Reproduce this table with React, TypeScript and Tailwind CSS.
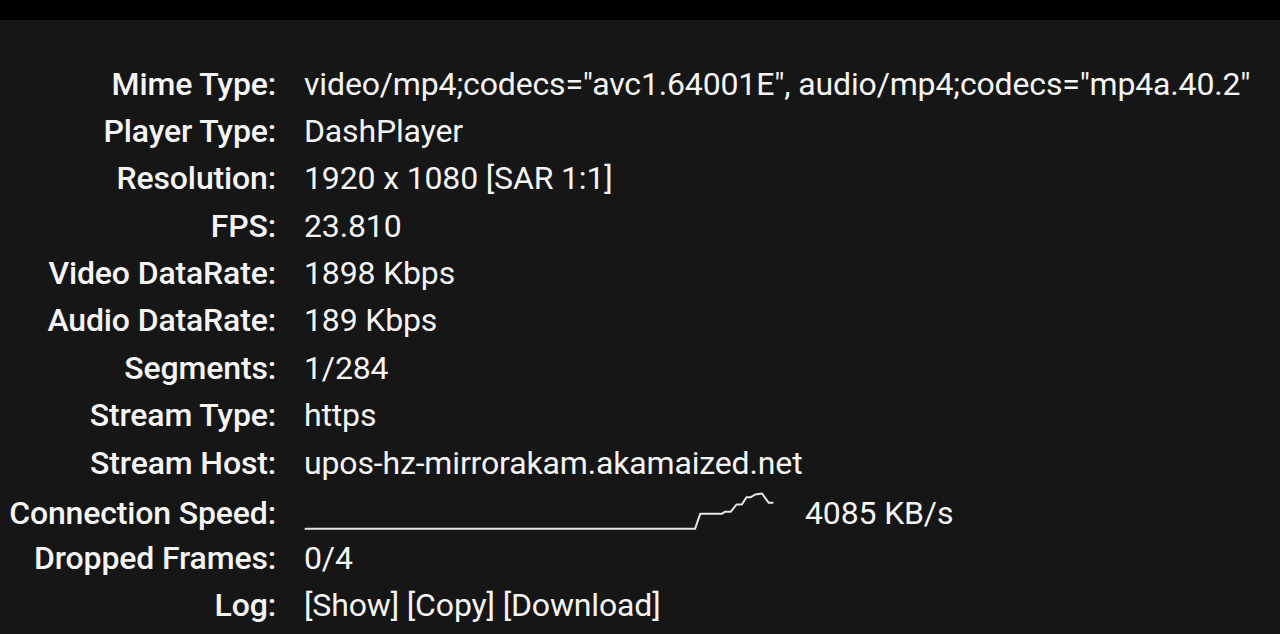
import React from 'react';

type Row = { label: string; value: string };

const rows: Row[] = [
  { label: 'Mime Type:', value: 'video/mp4;codecs="avc1.64001E", audio/mp4;codecs="mp4a.40.2"' },
  { label: 'Player Type:', value: 'DashPlayer' },
  { label: 'Resolution:', value: '1920 x 1080 [SAR 1:1]' },
  { label: 'FPS:', value: '23.810' },
  { label: 'Video DataRate:', value: '1898 Kbps' },
  { label: 'Audio DataRate:', value: '189 Kbps' },
  { label: 'Segments:', value: '1/284' },
  { label: 'Stream Type:', value: 'https' },
  { label: 'Stream Host:', value: 'upos-hz-mirrorakam.akamaized.net' },
];

// speed history, x/y inside the row box
const speedPoints = [
  [0.7, 42.8], [391, 42.8], [396.2, 27.8], [417.7, 27.8], [420.8, 25.8], [426.7, 25.8],
  [432.5, 18.5], [437.9, 18.5], [442.4, 11.2], [446.9, 11.2], [451.3, 8.5], [458, 7.5],
  [464.8, 16.8], [469.3, 16.8],
];

function SpeedGraph() {
  return (
    <svg width="472" height="47" viewBox="0 0 472 47" className="shrink-0">
      <polyline
        points={speedPoints.map((p) => p.join(',')).join(' ')}
        fill="none"
        stroke="#e6e6e6"
        strokeWidth="2"
        strokeLinejoin="round"
      />
    </svg>
  );
}

export default function App() {
  return (
    <div className="w-[1280px] h-[634px] overflow-hidden bg-[#161616] text-[#f4f4f4] font-['Roboto',sans-serif]">
      <div className="h-[20px] bg-black" />
      <div className="pt-[40px] grid grid-cols-[276px_1fr] gap-x-[28px] auto-rows-[47.36px] items-center text-[32px] leading-[38px] tracking-[-0.15px]">
        {rows.map((r) => (
          <React.Fragment key={r.label}>
            <div className="text-right font-medium whitespace-nowrap">{r.label}</div>
            <div className="whitespace-nowrap">{r.value}</div>
          </React.Fragment>
        ))}

        <div className="text-right font-medium whitespace-nowrap pt-[7px]">Connection Speed:</div>
        <div className="flex items-center h-full whitespace-nowrap">
          <SpeedGraph />
          <span className="ml-[29px] pt-[7px]">4085 KB/s</span>
        </div>

        <div className="text-right font-medium whitespace-nowrap pt-[2px]">Dropped Frames:</div>
        <div className="whitespace-nowrap pt-[2px]">0/4</div>

        <div className="text-right font-medium whitespace-nowrap">Log:</div>
        <div className="whitespace-nowrap">[Show] [Copy] [Download]</div>
      </div>
    </div>
  );
}
